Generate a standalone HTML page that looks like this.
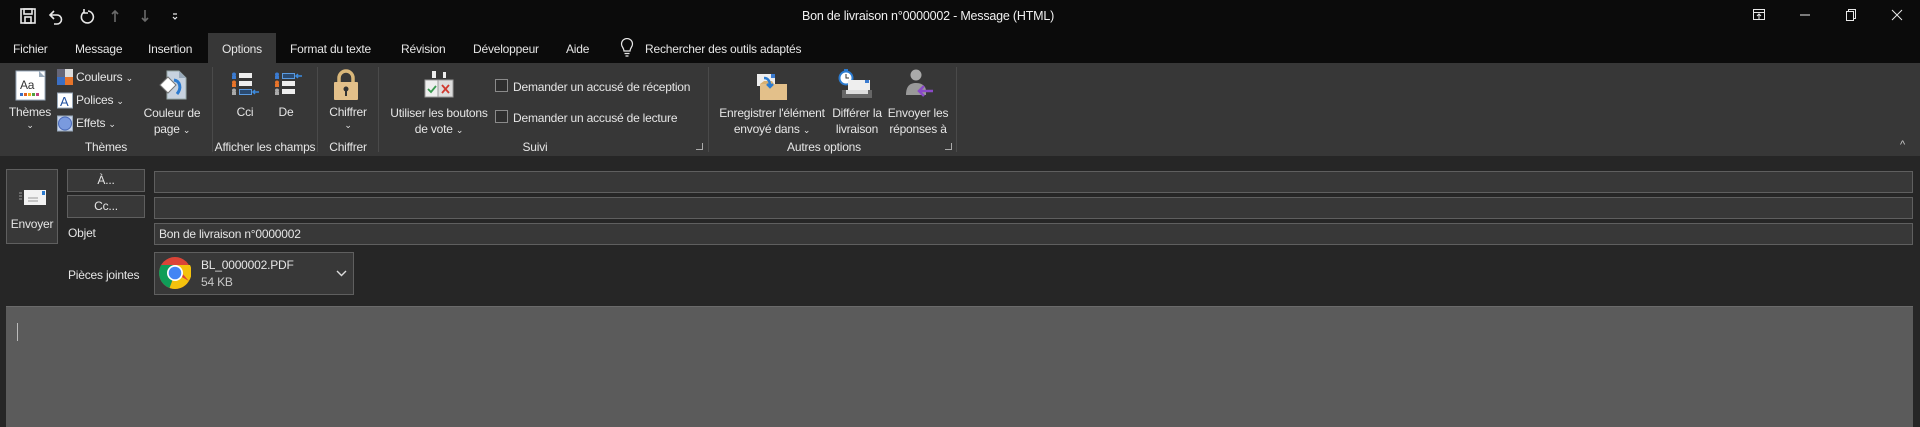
<!DOCTYPE html>
<html><head><meta charset="utf-8"><style>
*{margin:0;padding:0;box-sizing:border-box}
body{width:1920px;height:427px;overflow:hidden;background:#262626;font-family:"Liberation Sans","DejaVu Sans",sans-serif;font-size:12px;letter-spacing:-0.2px;color:#e6e6e6;position:relative}
.a{position:absolute;white-space:nowrap}
.c{text-align:center;transform:translateX(-50%)}
.sep{position:absolute;top:67px;width:1px;height:85px;background:#4a4a4a}
.chk{position:absolute;width:13px;height:13px;border:1px solid #8a8a8a;background:#2e2e2e}
.fld{position:absolute;left:154px;right:7px;height:22px;background:#383838;border:1px solid #5f5f5f}
.btn{position:absolute;background:#383838;border:1px solid #5f5f5f}
.gl{top:140px}
</style></head><body>
<div class="a" style="left:0;top:0;width:1920px;height:63px;background:#0b0b0b"></div>
<svg class="a" style="left:18px;top:5px" width="190" height="22" viewBox="0 0 190 22" fill="none" stroke="#e8e8e8" stroke-width="1.6">
<rect x="3" y="4" width="14" height="14"/><rect x="6" y="4" width="8" height="5"/><rect x="7" y="12" width="6" height="6"/>
<path d="M36 6 l-4 4 4 4 M32 10 h7 a4.5 4.5 0 0 1 0 9 h-3"/>
<path d="M66 7 a6 6 0 1 0 4 -1 M66 4 v4 h4"/>
<path d="M97 17 V6 M94 9 l3-3 3 3" stroke="#6a6a6a"/>
<path d="M127 5 v11 M124 13 l3 3 3-3" stroke="#6a6a6a"/>
<path d="M155 9 h4 M155 12 l2 2 2-2" stroke-width="1.2"/>
</svg>
<div class="a" style="left:802px;top:9px;font-size:12.5px;color:#f0f0f0">Bon de livraison n°0000002  -  Message (HTML)</div>
<svg class="a" style="left:1745px;top:5px" width="170" height="20" viewBox="0 0 170 20" fill="none" stroke="#e8e8e8" stroke-width="1">
<rect x="8.5" y="4.5" width="11" height="10"/><path d="M8.5 7.5h11 M14 9v5 M12 11l2-2 2 2"/>
<path d="M55 10h10"/>
<rect x="101.5" y="6.5" width="7" height="9"/><path d="M103.5 6.5v-2h7v9h-2"/>
<path d="M147 5l10 10 M157 5l-10 10"/>
</svg>
<div class="a" style="left:208px;top:33px;width:68px;height:30px;background:#373737"></div>
<div class="a" style="left:13px;top:42px">Fichier</div>
<div class="a" style="left:75px;top:42px">Message</div>
<div class="a" style="left:148px;top:42px">Insertion</div>
<div class="a" style="left:222px;top:42px">Options</div>
<div class="a" style="left:290px;top:42px">Format du texte</div>
<div class="a" style="left:401px;top:42px">Révision</div>
<div class="a" style="left:473px;top:42px">Développeur</div>
<div class="a" style="left:566px;top:42px">Aide</div>
<svg class="a" style="left:620px;top:38px" width="14" height="20" viewBox="0 0 14 20" fill="none" stroke="#e8e8e8" stroke-width="1.2"><path d="M4 13 C4 10 1.5 9 1.5 6 a5.5 5.5 0 0 1 11 0 c0 3-2.5 4-2.5 7z M4.5 15.5h5 M5.5 18h3"/></svg>
<div class="a" style="left:645px;top:42px">Rechercher des outils adaptés</div>
<div class="a" style="left:0;top:63px;width:1920px;height:93px;background:#373737"></div>
<svg class="a" style="left:15px;top:70px" width="31" height="31" viewBox="0 0 31 31"><rect x="1" y="1" width="29" height="29" fill="#fff" stroke="#9ab" /><path d="M24 1 l6 6 h-6z" fill="#9ab"/><text x="5" y="19" font-size="12" fill="#333" font-family="Liberation Sans">Aa</text><g><rect x="5" y="23" width="3" height="3" fill="#3b6fc4"/><rect x="9" y="23" width="3" height="3" fill="#e06020"/><rect x="13" y="23" width="3" height="3" fill="#f0b020"/><rect x="17" y="23" width="3" height="3" fill="#50a040"/><rect x="21" y="23" width="3" height="3" fill="#c04080"/></g></svg>
<div class="a c" style="left:30px;top:105px">Thèmes</div>
<div class="a c" style="left:30px;top:120px;font-size:9px">⌄</div>
<svg class="a" style="left:57px;top:69px" width="17" height="63" viewBox="0 0 17 63"><rect x="0" y="0" width="8" height="8" fill="#667"/><rect x="8" y="0" width="8" height="8" fill="#ddd"/><rect x="0" y="8" width="8" height="8" fill="#3b6fc4"/><rect x="8" y="8" width="8" height="8" fill="#e8742a"/><rect x="0.5" y="24" width="15" height="15" fill="#fff" stroke="#9ab"/><text x="3" y="37" font-size="13" fill="#2050a0" font-family="Liberation Sans">A</text><rect x="0.5" y="47" width="15" height="15" fill="#c8d4ee" stroke="#9ab"/><circle cx="8" cy="54.5" r="6.5" fill="#7a9ade" stroke="#4a6ab8"/></svg>
<div class="a" style="left:76px;top:70px">Couleurs <span style="font-size:9px">⌄</span></div>
<div class="a" style="left:76px;top:93px">Polices <span style="font-size:9px">⌄</span></div>
<div class="a" style="left:76px;top:116px">Effets <span style="font-size:9px">⌄</span></div>
<svg class="a" style="left:157px;top:70px" width="31" height="30" viewBox="0 0 31 30"><path d="M10 1h12l7 7v21H10z" fill="#c7d2df" stroke="#9aa"/><path d="M22 1v7h7" fill="#9ab"/><path d="M3 15 l8-8 8 8-8 8z" fill="#fff" stroke="#777"/><path d="M17 10 c6 1 8 8 3 14" stroke="#2b7bd0" stroke-width="3" fill="none"/></svg>
<div class="a c" style="left:172px;top:105px;line-height:16px">Couleur de<br>page <span style="font-size:9px">⌄</span></div>
<div class="a c gl" style="left:106px">Thèmes</div>
<div class="sep" style="left:212px"></div>
<svg class="a" style="left:231px;top:72px" width="72" height="25" viewBox="0 0 72 25"><g><circle cx="3" cy="2.5" r="2" fill="#3b7bd0"/><rect x="1" y="4" width="4" height="3" fill="#3b7bd0"/><rect x="8" y="1" width="13" height="5" fill="#eee"/><circle cx="3" cy="10.5" r="2" fill="#e8742a"/><rect x="1" y="12" width="4" height="3" fill="#e8742a"/><rect x="8" y="9" width="13" height="5" fill="#eee"/><circle cx="3" cy="18.5" r="2" fill="#aaa"/><rect x="1" y="20" width="4" height="3" fill="#aaa"/><rect x="8.5" y="17.5" width="12" height="5" fill="#2a4a70" stroke="#5a9ae0"/><path d="M28 20h-6 M24 18l-2 2 2 2" stroke="#3b8be0" stroke-width="1.5" fill="none"/></g>
<g transform="translate(43 0)"><circle cx="3" cy="2.5" r="2" fill="#3b7bd0"/><rect x="1" y="4" width="4" height="3" fill="#3b7bd0"/><rect x="8.5" y="1.5" width="12" height="5" fill="#2a4a70" stroke="#5a9ae0"/><path d="M28 4h-6 M24 2l-2 2 2 2" stroke="#3b8be0" stroke-width="1.5" fill="none"/><circle cx="3" cy="10.5" r="2" fill="#e8742a"/><rect x="1" y="12" width="4" height="3" fill="#e8742a"/><rect x="8" y="9" width="13" height="5" fill="#eee"/><circle cx="3" cy="18.5" r="2" fill="#aaa"/><rect x="1" y="20" width="4" height="3" fill="#aaa"/><rect x="8" y="17" width="13" height="5" fill="#eee"/></g></svg>
<div class="a c" style="left:245px;top:105px">Cci</div>
<div class="a c" style="left:286px;top:105px">De</div>
<div class="a c gl" style="left:265px">Afficher les champs</div>
<div class="sep" style="left:317px"></div>
<svg class="a" style="left:333px;top:69px" width="26" height="32" viewBox="0 0 26 32"><path d="M6 14 V9 a7 7 0 0 1 14 0 V14" stroke="#d9b77a" stroke-width="3.5" fill="none"/><rect x="1" y="13" width="24" height="18" rx="1" fill="#e3c08a"/><circle cx="13" cy="20" r="2.5" fill="#333"/><rect x="12" y="21" width="2" height="6" fill="#333"/></svg>
<div class="a c" style="left:348px;top:105px">Chiffrer</div>
<div class="a c" style="left:348px;top:120px;font-size:9px">⌄</div>
<div class="a c gl" style="left:348px">Chiffrer</div>
<div class="sep" style="left:378px"></div>
<svg class="a" style="left:424px;top:71px" width="30" height="27" viewBox="0 0 30 27"><rect x="8" y="0" width="4" height="7" fill="#eee"/><rect x="19" y="1" width="3" height="6" fill="#eee"/><rect x="1" y="9" width="14" height="17" fill="#eee" stroke="#999"/><rect x="14" y="9" width="15" height="17" fill="#ddd" stroke="#999"/><path d="M4 18l3 3 5-6" stroke="#3a9a50" stroke-width="1.8" fill="none"/><path d="M18 14l7 8 M25 14l-7 8" stroke="#d03a30" stroke-width="1.8"/></svg>
<div class="a c" style="left:439px;top:105px;line-height:16px">Utiliser les boutons<br>de vote <span style="font-size:9px">⌄</span></div>
<div class="chk" style="left:495px;top:79px"></div>
<div class="a" style="left:513px;top:80px">Demander un accusé de réception</div>
<div class="chk" style="left:495px;top:110px"></div>
<div class="a" style="left:513px;top:111px">Demander un accusé de lecture</div>
<div class="a c gl" style="left:535px">Suivi</div>
<div class="a" style="left:696px;top:143px;width:7px;height:7px;border-right:1px solid #aaa;border-bottom:1px solid #aaa"></div>
<div class="sep" style="left:708px"></div>
<svg class="a" style="left:757px;top:70px" width="30" height="30" viewBox="0 0 30 30"><path d="M0 4h18v12H0z" fill="#eee"/><rect x="14" y="4" width="4" height="4" fill="#3b7bd0"/><path d="M3 14h27v16H3z" fill="#e3c08a"/><path d="M3 14l4-3h8l2 3" fill="#d9b070"/><path d="M7 8 c4 0 6 3 6 8 M10 14l3 3 3-3" stroke="#2b7bd0" stroke-width="2.5" fill="none"/></svg>
<div class="a c" style="left:772px;top:105px;line-height:16px">Enregistrer l'élément<br>envoyé dans <span style="font-size:9px">⌄</span></div>
<svg class="a" style="left:838px;top:68px" width="36" height="32" viewBox="0 0 36 32"><circle cx="8" cy="10" r="6.5" fill="#fff" stroke="#2b7bd0" stroke-width="2"/><rect x="6" y="1" width="4" height="2" fill="#2b7bd0"/><path d="M8 6v4h3" stroke="#333" fill="none"/><rect x="10" y="12" width="22" height="12" fill="#eee"/><rect x="27" y="12" width="4" height="3" fill="#3b7bd0"/><path d="M4 22h30v8H4z" fill="#666"/><path d="M8 22h22v4H8z" fill="#ddd"/></svg>
<div class="a c" style="left:857px;top:105px;line-height:16px">Différer la<br>livraison</div>
<svg class="a" style="left:906px;top:69px" width="28" height="30" viewBox="0 0 28 30"><circle cx="10" cy="6" r="5.5" fill="#aaa"/><path d="M0 26c0-9 4-12 10-12s10 3 10 8v4z" fill="#999"/><path d="M27 22H13 M18 17l-5 5 5 5" stroke="#8a4ac8" stroke-width="2.5" fill="none"/></svg>
<div class="a c" style="left:918px;top:105px;line-height:16px">Envoyer les<br>réponses à</div>
<div class="a c gl" style="left:824px">Autres options</div>
<div class="a" style="left:945px;top:143px;width:7px;height:7px;border-right:1px solid #aaa;border-bottom:1px solid #aaa"></div>
<div class="sep" style="left:956px"></div>
<div class="a" style="left:1900px;top:139px;font-size:11px;color:#ccc">^</div>
<div class="btn" style="left:6px;top:169px;width:52px;height:75px"></div>
<svg class="a" style="left:18px;top:190px" width="28" height="15" viewBox="0 0 28 15"><rect x="6" y="0" width="22" height="15" fill="#f2f2f2"/><rect x="24" y="1" width="3" height="4" fill="#2b7bd0"/><path d="M10 8h10 M10 11h10" stroke="#999"/><path d="M1 3h3 M1 6h3 M1 9h3" stroke="#999"/></svg>
<div class="a c" style="left:32px;top:217px">Envoyer</div>
<div class="btn" style="left:67px;top:169px;width:78px;height:23px"></div>
<div class="a c" style="left:106px;top:173px">À...</div>
<div class="btn" style="left:67px;top:195px;width:78px;height:23px"></div>
<div class="a c" style="left:106px;top:199px">Cc...</div>
<div class="fld" style="top:171px"></div>
<div class="fld" style="top:197px"></div>
<div class="a" style="left:68px;top:226px">Objet</div>
<div class="fld" style="top:223px;padding:3px 4px">Bon de livraison n°0000002</div>
<div class="a" style="left:68px;top:268px">Pièces jointes</div>
<div class="btn" style="left:154px;top:252px;width:200px;height:43px"></div>
<svg class="a" style="left:159px;top:257px" width="32" height="32" viewBox="-16 -16 32 32"><circle r="16" fill="#db4437"/><path d="M0 0 L13.86 8 A16 16 0 0 1 -5.5 15 Z" fill="#f4c20d"/><path d="M0 0 L-5.5 15 A16 16 0 0 1 -13.86 -8 L0 -8 Z" fill="#0f9d58"/><path d="M0 -8 H15 A16 16 0 0 1 13.86 8 Z" fill="#f4c20d"/><circle r="8" fill="#fff"/><circle r="6.3" fill="#4285f4"/></svg>
<div class="a" style="left:201px;top:258px">BL_0000002.PDF</div>
<div class="a" style="left:201px;top:275px;color:#c8c8c8">54 KB</div>
<svg class="a" style="left:336px;top:270px" width="11" height="7" viewBox="0 0 11 7"><path d="M1 1l4.5 4.5L10 1" stroke="#ddd" stroke-width="1.4" fill="none"/></svg>
<div class="a" style="left:6px;top:306px;width:1907px;height:121px;background:#5b5b5b;border-top:1px solid #6a6a6a"></div>
<div class="a" style="left:17px;top:323px;width:1px;height:18px;background:#bbb"></div>
</body></html>
